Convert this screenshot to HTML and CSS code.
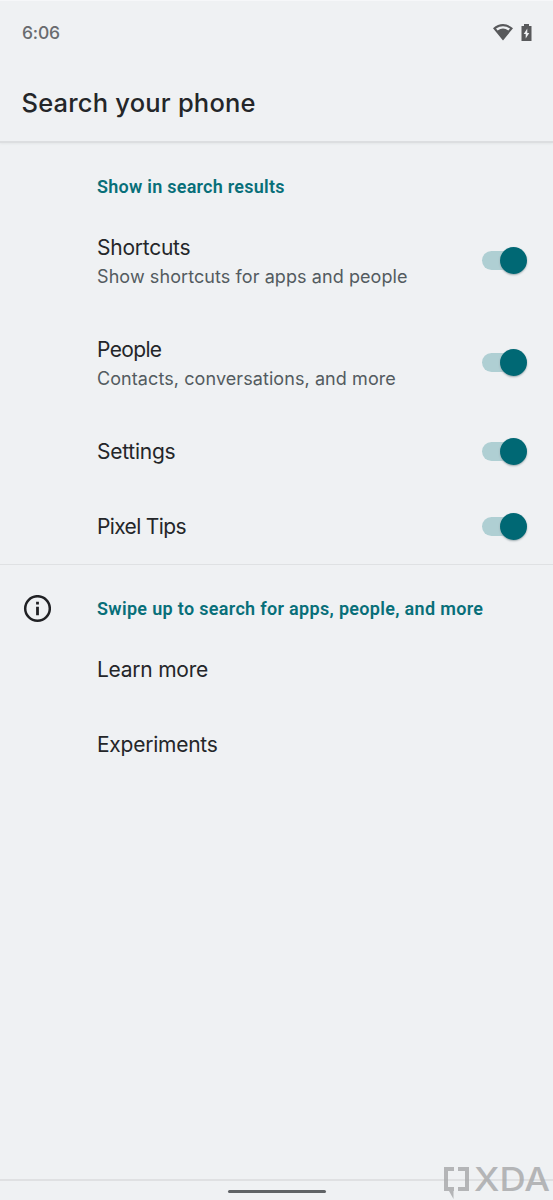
FILE: index.html
```html
<!DOCTYPE html>
<html lang="en">
<head>
<meta charset="utf-8">
<title>Search your phone</title>
<link rel="stylesheet" href="styles.css">
</head>
<body>
<div class="screen">
  <header class="header">
    <div class="status">
      <span class="clock">6:06</span>
      <svg class="status-icons" width="40" height="20" viewBox="0 0 40 20">
        <path class="status-fill" fill-rule="evenodd" d="M0 5.2Q10 -3 20 5.2L10 17.5ZM3 5.600L4.600 7.500Q10 3.600 15.400 7.500L17 5.600Q10 .9 3 5.600Z"/>
        <path class="status-fill" fill-rule="evenodd" d="M31 1h5v2h2.500v15h-10V3H31ZM34.300 5.500L30.700 11h2v4.500l3.600-5.500h-2Z"/>
      </svg>
    </div>
    <h1 class="title">Search your phone</h1>
  </header>
  <main class="list">
    <h2 class="section section-first">Show in search results</h2>
    <div class="row row-tall">
      <div class="copy"><span class="name">Shortcuts</span><span class="desc">Show shortcuts for apps and people</span></div>
      <div class="switch"><div class="knob"></div></div>
    </div>
    <div class="row row-tall">
      <div class="copy"><span class="name name-tight">People</span><span class="desc">Contacts, conversations, and more</span></div>
      <div class="switch"><div class="knob"></div></div>
    </div>
    <div class="row">
      <div class="copy"><span class="name">Settings</span></div>
      <div class="switch"><div class="knob"></div></div>
    </div>
    <div class="row">
      <div class="copy"><span class="name name-tight">Pixel Tips</span></div>
      <div class="switch"><div class="knob"></div></div>
    </div>
    <div class="about">
      <svg class="info" width="28" height="28" viewBox="0 0 28 28">
        <circle class="info-ring" cx="14.500" cy="13.500" r="12.300"/>
        <path class="info-mark" d="M13.100 6.700h2.800v2.800h-2.800ZM13.100 11.800h2.800v8.400h-2.800Z"/>
      </svg>
      <h2 class="section section-wide">Swipe up to search for apps, people, and more</h2>
    </div>
    <div class="row"><span class="name">Learn more</span></div>
    <div class="row"><span class="name">Experiments</span></div>
  </main>
  <footer class="nav"><div class="handle"></div></footer>
  <svg class="watermark" width="111" height="46" viewBox="0 -10 111 46">
    <path class="mark" d="M2 3h10v4H6v16h6v4h-.500v8L7 27H2ZM16 3h11v24H16v-4h7V7h-7Z"/>
    <text class="mark-text" x="32" y="26.500" textLength="76" lengthAdjust="spacingAndGlyphs">XDA</text>
  </svg>
</div>
</body>
</html>
```
FILE: styles.css
```css
body { margin: 0; background: #eff1f3; }
.screen {
  position: relative;
  display: flex;
  flex-direction: column;
  width: 553px;
  height: 1200px;
  overflow: hidden;
  background: #eff1f3;
  color: #242629;
  font-family: Inter, Roboto, sans-serif;
}
.header {
  box-sizing: border-box;
  height: 143px;
  flex: none;
  border-top: 1px solid #f6f7f9;
  border-bottom: 2px solid #dcdee0;
  box-shadow: 0 1px 2px #e4e6e8;
}
.status {
  display: flex;
  justify-content: space-between;
  align-items: center;
  height: 64px;
  padding: 0 20px 0 22px;
}
.clock { font-size: 17.5px; line-height: 24px; color: #696b6e; font-weight: 500; letter-spacing: -.2px; }
.status-icons { display: block; }
.status-fill { fill: #58595b; }
.title {
  margin: 0;
  padding: 22px 0 0 21.5px;
  font-size: 25.5px;
  line-height: 32px;
  font-weight: 500;
  letter-spacing: .2px;
}
.list { flex: 1; }
.section {
  margin: 0;
  font: 600 18px/24px Roboto, sans-serif;
  letter-spacing: .25px;
  color: #086f79;
  white-space: nowrap;
}
.section-wide { letter-spacing: .32px; }
.section-first { height: 35px; padding: 32px 0 0 97px; }
.row {
  display: flex;
  align-items: center;
  justify-content: space-between;
  box-sizing: border-box;
  height: 75px;
  padding: 0 26px 0 97px;
}
.row-tall { height: 102px; padding-bottom: 1px; }
.copy { display: flex; flex-direction: column; align-items: flex-start; gap: 1px; }
.row-tall .copy { padding-top: 3px; }
.name { font-size: 21px; line-height: 28px; letter-spacing: -.25px; white-space: nowrap; }
.name-tight { letter-spacing: -.65px; }
.desc { font-size: 18px; line-height: 28px; letter-spacing: .08px; color: #535b60; white-space: nowrap; }
.switch {
  display: flex;
  align-items: center;
  justify-content: flex-end;
  width: 45px;
  height: 19px;
  border-radius: 10px;
  background: linear-gradient(to right, #afcfd3 34px, transparent 34px);
}
.knob {
  flex: none;
  width: 27px;
  height: 27px;
  border-radius: 50%;
  background: #006874;
  box-shadow: 0 1px 2px #9aa8ad;
}
.about {
  display: flex;
  align-items: center;
  box-sizing: border-box;
  height: 68px;
  padding: 20px 0 0 23px;
  gap: 46px;
  border-top: 1px solid #dfe1e3;
}
.info { flex: none; }
.info-ring { fill: none; stroke: #202124; stroke-width: 2.5; }
.info-mark { fill: #202124; }
.nav {
  display: flex;
  justify-content: center;
  box-sizing: border-box;
  height: 21px;
  padding-top: 9px;
  border-top: 2px solid #dfe0e2;
}
.handle { width: 98px; height: 3px; border-radius: 2px; background: #606366; }
.watermark { position: absolute; right: 0; bottom: 0; opacity: .85; }
.mark { fill: #aaabad; }
.mark-text { fill: #aaabad; font: 500 32px/36px Inter, sans-serif; }
```
